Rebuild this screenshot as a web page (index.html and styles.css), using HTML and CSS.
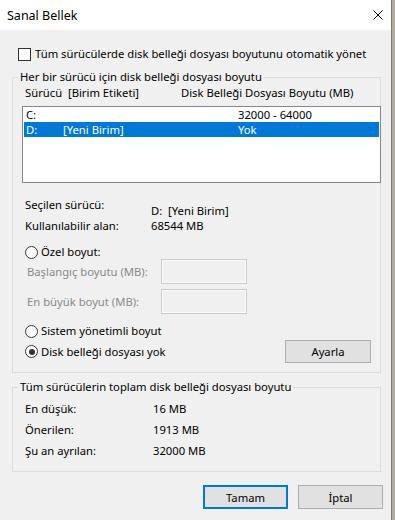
FILE: index.html
```html
<!DOCTYPE html>
<html lang="tr">
<head>
    <meta charset="UTF-8">
    <meta name="viewport" content="width=device-width, initial-scale=1.0">
    <title>Sanal Bellek</title>
    <link rel="stylesheet" href="styles.css">
</head>
<body>

    <div class="window">
        <!-- Title bar -->
        <div class="titlebar">
            <span class="title">Sanal Bellek</span>
            <svg class="close" viewBox="0 0 10 10" width="10" height="10">
                <path d="M0.5 0.5 L9.5 9.5 M9.5 0.5 L0.5 9.5" stroke="#000" stroke-width="1" fill="none"/>
            </svg>
        </div>

        <div class="content">
            <!-- Auto manage checkbox -->
            <div class="auto-row">
                <span class="checkbox"></span>
                <span>Tüm sürücülerde disk belleği dosyası boyutunu otomatik yönet</span>
            </div>

            <!-- Per drive group -->
            <fieldset class="group group-drives">
                <legend>Her bir sürücü için disk belleği dosyası boyutu</legend>

                <div class="list-head">
                    <span class="head-drive">Sürücü  [Birim Etiketi]</span>
                    <span>Disk Belleği Dosyası Boyutu (MB)</span>
                </div>

                <div class="listbox">
                    <div class="list-row">
                        <span class="c-drive">C:</span>
                        <span class="c-label"></span>
                        <span>32000 - 64000</span>
                    </div>
                    <div class="list-row selected">
                        <span class="c-drive">D:</span>
                        <span class="c-label">[Yeni Birim]</span>
                        <span>Yok</span>
                    </div>
                </div>

                <div class="drive-info">
                    <span>Seçilen sürücü:</span>
                    <span class="info-drive">D:  [Yeni Birim]</span>
                    <span>Kullanılabilir alan:</span>
                    <span>68544 MB</span>
                </div>

                <div class="radio-row custom-row">
                    <span class="radio"></span>
                    <span>Özel boyut:</span>
                </div>

                <div class="size-row">
                    <span class="size-label">Başlangıç boyutu (MB):</span>
                    <span class="textbox"></span>
                </div>
                <div class="size-row second">
                    <span class="size-label">En büyük boyut (MB):</span>
                    <span class="textbox"></span>
                </div>

                <div class="radio-row system-row">
                    <span class="radio"></span>
                    <span>Sistem yönetimli boyut</span>
                </div>

                <div class="last-row">
                    <div class="radio-row">
                        <span class="radio checked"></span>
                        <span>Disk belleği dosyası yok</span>
                    </div>
                    <button class="btn btn-set">Ayarla</button>
                </div>
            </fieldset>

            <!-- Totals group -->
            <fieldset class="group group-totals">
                <legend>Tüm sürücülerin toplam disk belleği dosyası boyutu</legend>
                <div class="totals">
                    <span>En düşük:</span>
                    <span>16 MB</span>
                    <span>Önerilen:</span>
                    <span>1913 MB</span>
                    <span>Şu an ayrılan:</span>
                    <span>32000 MB</span>
                </div>
            </fieldset>

            <!-- Dialog buttons -->
            <div class="dialog-buttons">
                <button class="btn btn-default">Tamam</button>
                <button class="btn">İptal</button>
            </div>
        </div>
    </div>

</body>
</html>
```

FILE: styles.css
```css
* {
    box-sizing: border-box;
}
body {
    margin: 0;
    background-color: #b3ab9c;
    font-family: "Noto Sans", "Segoe UI", sans-serif;
    font-size: 11.25px;
    color: #000;
}
.window {
    width: 392px;
    height: 520px;
    background-color: #f0f0f0;
    border-right: 1px solid #7a7a7a;
}
.titlebar {
    height: 30px;
    background-color: #fff;
    display: flex;
    align-items: center;
    justify-content: space-between;
    padding: 0 8px 0 7px;
}
.title {
    font-size: 12.5px;
}
.close {
    display: block;
}
.content {
    padding-top: 17px;
}
.auto-row {
    display: flex;
    align-items: center;
    height: 14px;
    line-height: 14px;
    margin-left: 18px;
}
.checkbox {
    width: 13px;
    height: 13px;
    border: 1px solid #333;
    background-color: #fff;
    margin-right: 4px;
}
.group {
    margin: 8px 0 0 12px;
    width: 369px;
    min-width: 0;
    padding: 0 0 9px 0;
    border: 1px solid #dcdcdc;
}
.group legend {
    margin-left: 5px;
    padding: 0 2px;
    line-height: 16px;
}
.list-head {
    display: flex;
    margin-top: 1px;
    padding-left: 12px;
    line-height: 14px;
}
.head-drive {
    width: 156px;
    white-space: pre;
}
.listbox {
    margin: 6px 0 0 9px;
    width: 359px;
    height: 77px;
    border: 1px solid #828790;
    background-color: #fff;
    padding: 0 1px;
}
.list-row {
    display: flex;
    height: 15px;
    line-height: 15px;
    padding-left: 2px;
}
.list-row.selected {
    background-color: #0078d7;
    color: #fff;
}
.c-drive {
    width: 37px;
}
.c-label {
    width: 175px;
}
.drive-info {
    display: grid;
    grid-template-columns: 126px auto;
    row-gap: 1px;
    margin-top: 15px;
    padding-left: 12px;
    line-height: 14px;
}
.info-drive {
    margin-top: 6px;
    white-space: pre;
}
.radio-row {
    display: flex;
    align-items: center;
    height: 14px;
    line-height: 14px;
    padding-left: 12px;
}
.radio {
    width: 13px;
    height: 13px;
    border: 1px solid #333;
    border-radius: 50%;
    background-color: #fff;
    margin-right: 3px;
    position: relative;
}
.radio.checked::after {
    content: "";
    position: absolute;
    left: 2.5px;
    top: 2.5px;
    width: 6px;
    height: 6px;
    border-radius: 50%;
    background-color: #333;
}
.custom-row {
    margin-top: 12px;
}
.size-row {
    display: flex;
    align-items: center;
    height: 25px;
    padding-left: 14px;
    color: #8a8a8a;
}
.size-row.second {
    margin-top: 5px;
}
.size-label {
    width: 134px;
}
.textbox {
    width: 86px;
    height: 25px;
    border: 1px solid #cccccc;
    box-shadow: inset 0 0 0 1px #fafafa;
    background-color: #f0f0f0;
}
.system-row {
    margin-top: 10px;
}
.last-row {
    display: flex;
    align-items: center;
    justify-content: space-between;
    height: 23px;
    margin-top: 2px;
    padding-right: 9px;
}
.btn {
    font-family: inherit;
    font-size: 11.25px;
    color: #000;
    background-color: #e1e1e1;
    border: 1px solid #adadad;
    padding: 0;
    width: 85px;
    height: 24px;
}
.btn-set {
    width: 86px;
    height: 23px;
}
.btn-default {
    border: 2px solid #0078d7;
}
.group-totals {
    margin-top: 6px;
    padding-bottom: 13px;
}
.totals {
    display: grid;
    grid-template-columns: 128px auto;
    row-gap: 7px;
    margin-top: 7px;
    padding-left: 12px;
    line-height: 14px;
}
.dialog-buttons {
    display: flex;
    justify-content: flex-end;
    gap: 10px;
    margin-top: 13px;
    padding-right: 8px;
}
```
